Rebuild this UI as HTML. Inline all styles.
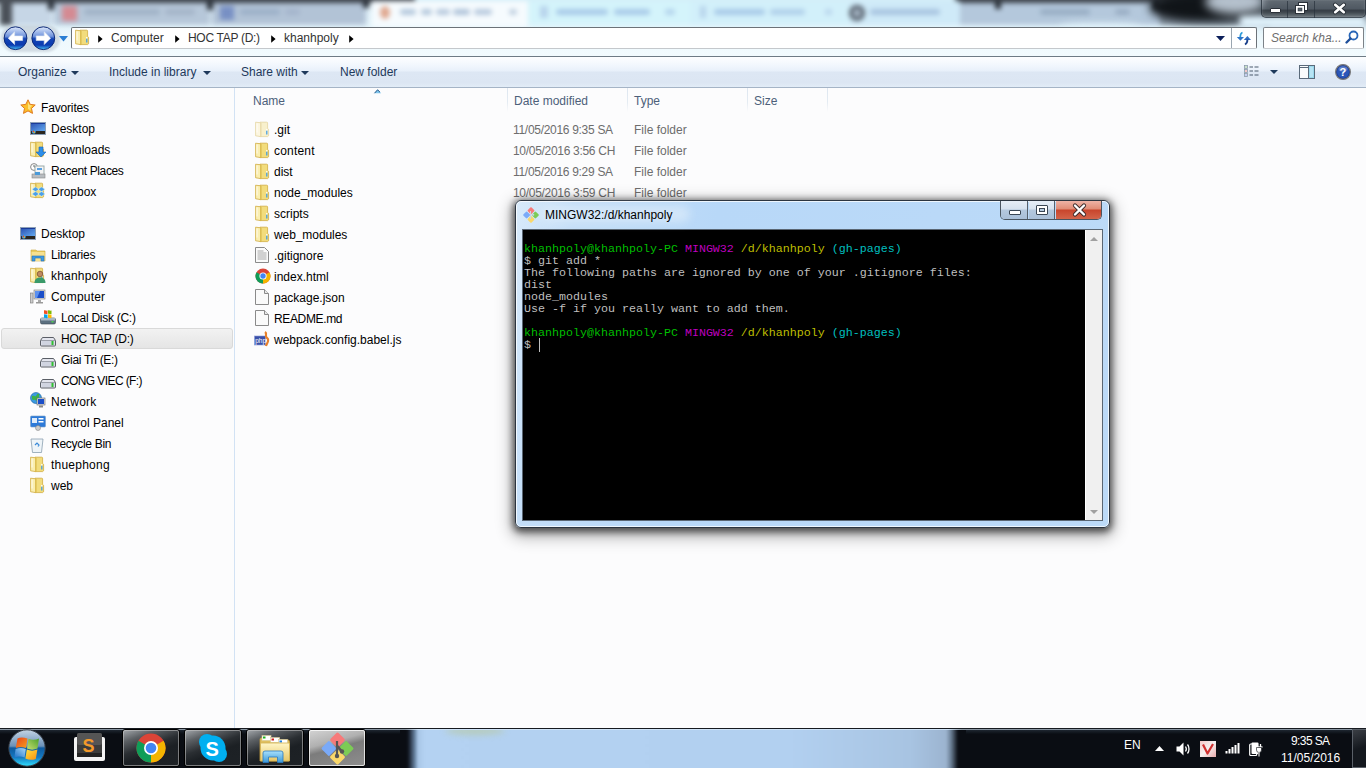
<!DOCTYPE html><html><head><meta charset="utf-8"><style>
*{margin:0;padding:0;box-sizing:border-box}
html,body{width:1366px;height:768px;overflow:hidden;background:#fcfcfd;font-family:"Liberation Sans",sans-serif;font-size:12px;color:#000}
.a{position:absolute}
.t{position:absolute;white-space:nowrap;line-height:14px;height:14px}
svg{position:absolute;overflow:visible}
#top{left:0;top:0;width:1366px;height:56px;overflow:hidden;background:#e4f2fa}
#sep{left:0;top:56px;width:1366px;height:1px;background:#6e7b85}
#tb{left:0;top:57px;width:1366px;height:31px;background:linear-gradient(#fdfeff 0,#f2f7fd 8px,#e8f0fa 14px,#dde7f4 15px,#dce6f3 26px,#e2ecf7 30px);border-bottom:1px solid #a5b4c6}
#split{left:234px;top:88px;width:1px;height:640px;background:#d2e2f4}
.tbt{color:#1e395b}
.dd{position:absolute;width:0;height:0;border-left:4px solid transparent;border-right:4px solid transparent;border-top:4px solid #1e395b}
.nv{color:#000}
.hd{color:#4c607a}
.gr{color:#6d6d6d}
</style></head><body>
<div id="top" class="a">
<div class="a" style="left:0;top:0;width:1366px;height:56px;background:linear-gradient(#dcecf6 0,#e4f4fb 26px,#eef9fd 40px,#f2fbfe 56px)"></div>
<div class="a" style="left:-10px;top:-10px;width:1400px;height:50px;filter:blur(2.4px)"><div class="a" style="left:0px;top:0px;width:425px;height:13px;background:#3e444c;"></div><div class="a" style="left:965px;top:0px;width:440px;height:13px;background:#3e444c;"></div><div class="a" style="left:425px;top:0px;width:540px;height:13px;background:#d4eef8;"></div><div class="a" style="left:14px;top:13px;width:48px;height:22px;background:#c6d6e6;"></div><div class="a" style="left:10px;top:0px;width:12px;height:35px;background:#4a5058;"></div><div class="a" style="left:64px;top:13px;width:156px;height:22px;background:#b6c7d9;"></div><div class="a" style="left:222px;top:13px;width:154px;height:22px;background:#b2c3d6;"></div><div class="a" style="left:382px;top:11px;width:156px;height:26px;background:#f6fbfe;"></div><div class="a" style="left:538px;top:11px;width:162px;height:24px;background:#d4f4fb;"></div><div class="a" style="left:700px;top:11px;width:160px;height:24px;background:#d2f0fa;"></div><div class="a" style="left:860px;top:11px;width:110px;height:24px;background:#cfeaf8;"></div><div class="a" style="left:970px;top:13px;width:200px;height:22px;background:#b4c8dc;"></div><div class="a" style="left:1170px;top:13px;width:110px;height:22px;background:#8a98a6;"></div><div class="a" style="left:58px;top:10px;width:6px;height:10px;background:#2a3038;"></div><div class="a" style="left:217px;top:10px;width:6px;height:10px;background:#2a3038;"></div><div class="a" style="left:373px;top:10px;width:6px;height:8px;background:#2a3038;"></div><div class="a" style="left:1005px;top:10px;width:6px;height:9px;background:#2a3038;"></div><div class="a" style="left:1163px;top:10px;width:6px;height:9px;background:#2a3038;"></div><div class="a" style="left:72px;top:16px;width:15px;height:15px;background:#d48a92;"></div><div class="a" style="left:230px;top:16px;width:14px;height:14px;background:#7890c4;"></div><div class="a" style="left:390px;top:16px;width:10px;height:13px;background:#e0a890;border-radius:50%"></div><div class="a" style="left:550px;top:16px;width:8px;height:12px;background:#b8d4ec;"></div><div class="a" style="left:710px;top:16px;width:6px;height:12px;background:#b8d4ec;"></div><div class="a" style="left:859px;top:15px;width:16px;height:16px;background:#58626e;border-radius:50%"></div><div class="a" style="left:863px;top:19px;width:8px;height:8px;background:#a8b8c8;border-radius:50%"></div><div class="a" style="left:94px;top:19px;width:76px;height:6px;background:#a0b2c6;border-radius:3px"></div><div class="a" style="left:175px;top:19px;width:30px;height:6px;background:#a4b4c8;border-radius:3px"></div><div class="a" style="left:250px;top:19px;width:40px;height:6px;background:#9cb0c8;border-radius:3px"></div><div class="a" style="left:295px;top:19px;width:15px;height:6px;background:#a4b4cc;border-radius:3px"></div><div class="a" style="left:410px;top:19px;width:16px;height:6px;background:#b4c8dc;border-radius:3px"></div><div class="a" style="left:431px;top:19px;width:11px;height:6px;background:#b4c8dc;border-radius:3px"></div><div class="a" style="left:446px;top:19px;width:14px;height:6px;background:#b8cade;border-radius:3px"></div><div class="a" style="left:463px;top:19px;width:17px;height:6px;background:#b0c4da;border-radius:3px"></div><div class="a" style="left:484px;top:19px;width:18px;height:6px;background:#b8cade;border-radius:3px"></div><div class="a" style="left:519px;top:19px;width:8px;height:6px;background:#c0d0e0;border-radius:3px"></div><div class="a" style="left:566px;top:19px;width:52px;height:6px;background:#a8cae8;border-radius:3px"></div><div class="a" style="left:624px;top:19px;width:36px;height:6px;background:#a8cae8;border-radius:3px"></div><div class="a" style="left:675px;top:19px;width:10px;height:6px;background:#b4d4ec;border-radius:3px"></div><div class="a" style="left:724px;top:19px;width:51px;height:6px;background:#a8cae8;border-radius:3px"></div><div class="a" style="left:780px;top:19px;width:35px;height:6px;background:#b0d0ea;border-radius:3px"></div><div class="a" style="left:835px;top:19px;width:7px;height:6px;background:#b8d4ec;border-radius:3px"></div><div class="a" style="left:880px;top:19px;width:70px;height:6px;background:#a8c4e0;border-radius:3px"></div><div class="a" style="left:1050px;top:19px;width:50px;height:6px;background:#98aec4;border-radius:3px"></div><div class="a" style="left:1125px;top:19px;width:15px;height:6px;background:#9aaec4;border-radius:3px"></div></div>
<div class="a" style="left:0;top:-10px;width:1366px;height:45px;filter:blur(5px)"><div class="a" style="left:1150px;top:2px;width:115px;height:30px;border-radius:45%;background:#101418"></div><div class="a" style="left:1205px;top:0;width:60px;height:24px;border-radius:50%;background:#b4c0cc"></div><div class="a" style="left:1262px;top:0;width:110px;height:32px;background:#46505a"></div><div class="a" style="left:1060px;top:34px;width:80px;height:10px;border-radius:40%;background:#e0f2fa"></div></div>
<div class="a" style="left:1240px;top:16px;width:126px;height:12px;background:#e0f2fc;filter:blur(3px)"></div>
</div>
<div class="a" style="left:1px;top:25px;width:59px;height:27px;border-radius:14px;background:rgba(190,200,210,0.6);filter:blur(1.2px)"></div>
<svg style="left:0;top:20px" width="60" height="40" viewBox="0 0 60 40"><defs><linearGradient id="nbg" x1="0" y1="0" x2="0" y2="1"><stop offset="0" stop-color="#dde8fb"/><stop offset="0.42" stop-color="#6f93dc"/><stop offset="0.52" stop-color="#1546b4"/><stop offset="0.8" stop-color="#0b3ab0"/><stop offset="1" stop-color="#46c0f6"/></linearGradient></defs><circle cx="15.5" cy="18.2" r="11.4" fill="url(#nbg)" stroke="#0e2a78" stroke-width="1"/><circle cx="43.3" cy="18.2" r="11.4" fill="url(#nbg)" stroke="#0e2a78" stroke-width="1"/><path d="M8.2 18.2L14.6 11.8V15.9H22.6V20.5H14.6V24.6Z" fill="#fff" stroke="#dfe6f0" stroke-width=".6" stroke-linejoin="round"/><path d="M50.6 18.2L44.2 11.8V15.9H36.2V20.5H44.2V24.6Z" fill="#fff" stroke="#dfe6f0" stroke-width=".6" stroke-linejoin="round"/></svg>
<svg style="left:59px;top:36px" width="10" height="6" viewBox="0 0 10 6"><path d="M0 0h9L4.5 5.5z" fill="#2a7fd4"/></svg>
<div class="a" style="left:71px;top:27px;width:1186px;height:22px;background:#fff;border:1px solid #6c7278;border-bottom-color:#c4c8cc;border-radius:2px"></div>
<div class="a" style="left:1231px;top:28px;width:1px;height:20px;background:#9aa6b1"></div>
<svg style="left:1216px;top:36px" width="9" height="6" viewBox="0 0 9 6"><path d="M0 0h9L4.5 5z" fill="#0c1f5a"/></svg>
<svg style="left:1236px;top:30px" width="16" height="16" viewBox="0 0 16 16"><path d="M6.5 2.5C5 3 4.2 4.5 4.3 7.5" stroke="#2a9ad8" stroke-width="1.8" fill="none"/><path d="M0.8 7H8L4.4 10.8z" fill="#2f74c8"/><path d="M7.8 10H15L11.4 6z" fill="#2f6cc0"/><path d="M11.4 9.5C11.5 12 10.8 13.5 9 14.5" stroke="#1a3f8a" stroke-width="1.8" fill="none"/></svg>
<div class="a" style="left:1263px;top:27px;width:101px;height:22px;background:#fff;border:1px solid #7c8288;border-bottom-color:#c8ccd0;border-radius:2px"></div>
<div class="t" style="left:1271px;top:31px;color:#6d6d6d;font-style:italic">Search kha...</div>
<svg style="left:1345px;top:30px" width="14" height="15" viewBox="0 0 14 15"><circle cx="8.5" cy="5.5" r="4" stroke="#2866b8" stroke-width="1.8" fill="none"/><path d="M5.5 8.5L1.5 12.5" stroke="#1f4f9a" stroke-width="2.4" stroke-linecap="round"/></svg>
<svg style="left:75px;top:29px" width="14" height="16" viewBox="0 0 14 16"><path d="M5 1.2h6.8a.8.8 0 0 1 .8.8v5.5l1 .8v6.5l-1 .8H5z" fill="#f2dc7c" stroke="#d0ac40" stroke-width="0.8"/><path d="M0.6 1.2l5.2 .6v13.8l-5.2-.8z" fill="#faeeb0" stroke="#d0ac40" stroke-width="0.8"/><path d="M2 2.5v9" stroke="#fff" stroke-width="1" opacity=".8"/><path d="M5.8 2v13.5" stroke="#dcbc4c" stroke-width="1"/><path d="M11.8 9.5v4" stroke="#3a9ae8" stroke-width="1.2"/><path d="M11.8 8v1.5" stroke="#fff" stroke-width="1.2"/></svg>
<svg style="left:98px;top:34.5px" width="5" height="8" viewBox="0 0 5 8"><path d="M0.2 0.2v7.6L4.6 4z" fill="#000"/></svg>
<div class="t" style="left:111px;top:31px;color:#333">Computer</div>
<svg style="left:175px;top:34.5px" width="5" height="8" viewBox="0 0 5 8"><path d="M0.2 0.2v7.6L4.6 4z" fill="#000"/></svg>
<div class="t" style="left:188px;top:31px;color:#333;letter-spacing:-0.3px">HOC TAP (D:)</div>
<svg style="left:271px;top:34.5px" width="5" height="8" viewBox="0 0 5 8"><path d="M0.2 0.2v7.6L4.6 4z" fill="#000"/></svg>
<div class="t" style="left:284px;top:31px;color:#333">khanhpoly</div>
<svg style="left:349px;top:34.5px" width="5" height="8" viewBox="0 0 5 8"><path d="M0.2 0.2v7.6L4.6 4z" fill="#000"/></svg>
<div class="a" style="left:1261px;top:0;width:105px;height:18px;border:1px solid rgba(40,50,60,0.8);border-top:none;border-radius:0 0 5px 5px;background:linear-gradient(rgba(255,255,255,0.15),rgba(255,255,255,0.05) 9px,rgba(0,0,0,0.25) 10px,rgba(0,0,0,0.35));box-shadow:inset 0 0 1px rgba(255,255,255,.5)"></div>
<div class="a" style="left:1287px;top:1px;width:1px;height:17px;background:rgba(40,50,60,0.7)"></div>
<div class="a" style="left:1314px;top:1px;width:1px;height:17px;background:rgba(40,50,60,0.7)"></div>
<div class="a" style="left:1270px;top:8px;width:11px;height:5px;background:#fff;border:1px solid #2a3038;border-radius:1px"></div>
<svg style="left:1295px;top:2px" width="13" height="12" viewBox="0 0 13 12"><rect x="3.5" y="0.5" width="9" height="8" fill="#fff" stroke="#2a3038"/><rect x="0.5" y="3.5" width="9" height="8" fill="#fff" stroke="#2a3038"/><rect x="3" y="6" width="4" height="3" fill="#5a646e" stroke="#2a3038" stroke-width=".5"/></svg>
<svg style="left:1333px;top:3px" width="13" height="11" viewBox="0 0 13 11"><path d="M2.2 1.8L10.8 9.2M10.8 1.8L2.2 9.2" stroke="#2a3038" stroke-width="4.4" stroke-linecap="round"/><path d="M2.2 1.8L10.8 9.2M10.8 1.8L2.2 9.2" stroke="#fff" stroke-width="2.6" stroke-linecap="round"/></svg>
<div id="sep" class="a"></div>
<div id="tb" class="a"></div>
<div id="split" class="a"></div>
<div class="t tbt" style="left:18px;top:65px">Organize</div><div class="dd" style="left:71px;top:71px"></div>
<div class="t tbt" style="left:109px;top:65px">Include in library</div><div class="dd" style="left:203px;top:71px"></div>
<div class="t tbt" style="left:241px;top:65px">Share with</div><div class="dd" style="left:301px;top:71px"></div>
<div class="t tbt" style="left:340px;top:65px">New folder</div>
<svg style="left:1244px;top:65px" width="16" height="13" viewBox="0 0 16 13"><rect x="0.5" y="0.5" width="3" height="3" fill="#fff" stroke="#8898a8" stroke-width=".8"/><rect x="1.5" y="1.5" width="1" height="1" fill="#2a8a2a"/><rect x="0.5" y="4.5" width="3" height="3" fill="#fff" stroke="#8898a8" stroke-width=".8"/><rect x="1.5" y="5.5" width="1" height="1" fill="#d02020"/><rect x="0.5" y="8.5" width="3" height="3" fill="#fff" stroke="#8898a8" stroke-width=".8"/><rect x="1.5" y="9.5" width="1" height="1" fill="#2040d0"/><path d="M5.5 2h3.5M10.5 2h4M5.5 6h3.5M10.5 6h4M5.5 10h3.5M10.5 10h4" stroke="#4a5a6c" stroke-width="1.1"/></svg>
<div class="dd" style="left:1270px;top:70px;border-top-color:#1e395b"></div>
<svg style="left:1299px;top:65px" width="16" height="14" viewBox="0 0 16 14"><rect x="0.5" y="0.5" width="15" height="13" fill="#fafbfc" stroke="#5a6a7a"/><path d="M1 2.5h8" stroke="#5a6a7a" stroke-width="1"/><rect x="9.5" y="0.5" width="6" height="13" fill="#9ad8ec" stroke="#5a6a7a"/><rect x="11" y="2" width="3" height="10" fill="#b8e4f4"/></svg>
<svg style="left:1335px;top:64px" width="16" height="16" viewBox="0 0 16 16"><circle cx="8" cy="8" r="7.4" fill="#1a3c9a" stroke="#7a7a7a" stroke-width="1.2"/><circle cx="8" cy="8" r="6" fill="#2a56b8"/><ellipse cx="8" cy="5" rx="4.5" ry="2.8" fill="rgba(255,255,255,.22)"/><text x="4.6" y="12.3" font-size="11" font-weight="bold" font-family="Liberation Sans" fill="#fff">?</text></svg>
<svg style="left:374px;top:89px" width="8" height="5" viewBox="0 0 8 5"><path d="M0.3 4.2L3.6 0.6 7.2 4.2z" fill="#7ec4ec"/><path d="M0.5 4.2L3.6 0.8 6 3.2" fill="none" stroke="#2a5a88" stroke-width="1"/></svg>
<div class="a" style="left:507px;top:88px;width:1px;height:24px;background:linear-gradient(#dde6f0,#e4ebf2 60%,#fcfcfd)"></div>
<div class="a" style="left:627px;top:88px;width:1px;height:24px;background:linear-gradient(#dde6f0,#e4ebf2 60%,#fcfcfd)"></div>
<div class="a" style="left:747px;top:88px;width:1px;height:24px;background:linear-gradient(#dde6f0,#e4ebf2 60%,#fcfcfd)"></div>
<div class="a" style="left:827px;top:88px;width:1px;height:24px;background:linear-gradient(#dde6f0,#e4ebf2 60%,#fcfcfd)"></div>
<div class="a" style="left:1px;top:328px;width:232px;height:21px;border:1px solid #d9d9d9;border-radius:3px;background:linear-gradient(#f2f2f2,#e5e5e5)"></div>
<div class="t nv" style="left:41px;top:101px;letter-spacing:-0.16px">Favorites</div>
<svg style="left:20px;top:99px" width="16" height="16" viewBox="0 0 16 16"><path d="M8 0.8l2.2 4.6 5 .6-3.7 3.4 1 5-4.5-2.5-4.5 2.5 1-5L.8 6l5-.6z" fill="#fbbf2a" stroke="#e07a20" stroke-width="1"/><path d="M8 3l1.4 3 3 .4-2.2 2 .6 3L8 10" fill="#fde27a"/></svg>
<div class="t nv" style="left:51px;top:122px;letter-spacing:0px">Desktop</div>
<svg style="left:30px;top:122px" width="16" height="13" viewBox="0 0 16 13"><defs><linearGradient id="dskg" x1="0" y1="0" x2="1" y2="1"><stop offset="0" stop-color="#2a50b0"/><stop offset="1" stop-color="#62a8f0"/></linearGradient></defs><rect x="0.5" y="0.5" width="15" height="12" fill="#a8b8cc" stroke="#8ca0b8"/><rect x="1" y="1" width="14" height="8" fill="url(#dskg)"/><rect x="1" y="1" width="14" height="1" fill="#1a3a98"/><rect x="1" y="9" width="14" height="3" fill="#2a2620"/><circle cx="3.8" cy="9.8" r="2" fill="#3a9ae8"/><circle cx="3.4" cy="9.4" r=".8" fill="#e83a20"/><circle cx="4.3" cy="10.2" r=".8" fill="#f0c020"/></svg>
<div class="t nv" style="left:51px;top:143px;letter-spacing:0px">Downloads</div>
<svg style="left:30px;top:141px" width="14" height="16" viewBox="0 0 14 16"><path d="M5 1.2h6.8a.8.8 0 0 1 .8.8v5.5l1 .8v6.5l-1 .8H5z" fill="#f2dc7c" stroke="#d0ac40" stroke-width="0.8"/><path d="M0.6 1.2l5.2 .6v13.8l-5.2-.8z" fill="#faeeb0" stroke="#d0ac40" stroke-width="0.8"/><path d="M2 2.5v9" stroke="#fff" stroke-width="1" opacity=".8"/><path d="M5.8 2v13.5" stroke="#dcbc4c" stroke-width="1"/><path d="M11.8 9.5v4" stroke="#3a9ae8" stroke-width="1.2"/><path d="M11.8 8v1.5" stroke="#fff" stroke-width="1.2"/></svg><svg style="left:36px;top:147px" width="10" height="10" viewBox="0 0 10 10"><path d="M3 0h4v5h3L5 10 0 5h3z" fill="#2d8ee8" stroke="#1a66b8" stroke-width=".6"/></svg>
<div class="t nv" style="left:51px;top:164px;letter-spacing:-0.38px">Recent Places</div>
<svg style="left:30px;top:163px" width="16" height="16" viewBox="0 0 16 16"><circle cx="4" cy="4" r="3.4" fill="#fff" stroke="#888"/><path d="M4 2v2h2" stroke="#444" stroke-width=".8" fill="none"/><rect x="5" y="3" width="9" height="10" fill="#f4f4f4" stroke="#9aa"/><rect x="7" y="5" width="5" height="2" fill="#5aa0e0"/><rect x="2" y="11" width="13" height="4" fill="#b8bcc0" stroke="#888" stroke-width=".6"/><rect x="5" y="9" width="5" height="3" fill="#4a9ad8"/></svg>
<div class="t nv" style="left:51px;top:185px;letter-spacing:0px">Dropbox</div>
<svg style="left:30px;top:182px" width="14" height="16" viewBox="0 0 14 16"><path d="M5 1.2h6.8a.8.8 0 0 1 .8.8v5.5l1 .8v6.5l-1 .8H5z" fill="#f2dc7c" stroke="#d0ac40" stroke-width="0.8"/><path d="M0.6 1.2l5.2 .6v13.8l-5.2-.8z" fill="#faeeb0" stroke="#d0ac40" stroke-width="0.8"/><path d="M2 2.5v9" stroke="#fff" stroke-width="1" opacity=".8"/><path d="M5.8 2v13.5" stroke="#dcbc4c" stroke-width="1"/><path d="M11.8 9.5v4" stroke="#3a9ae8" stroke-width="1.2"/><path d="M11.8 8v1.5" stroke="#fff" stroke-width="1.2"/></svg><svg style="left:32px;top:187px" width="13" height="11" viewBox="0 0 13 11"><path d="M3.5 0L0 2.3l3.5 2.3L7 2.3zM9.5 0L6 2.3l3.5 2.3L13 2.3zM0 7l3.5 2.3L7 7 3.5 4.6zM13 7L9.5 9.3 6 7l3.5-2.4z" fill="#4c9ee8" stroke="#dff" stroke-width=".4"/></svg>
<div class="t nv" style="left:41px;top:227px;letter-spacing:0px">Desktop</div>
<svg style="left:20px;top:227px" width="16" height="13" viewBox="0 0 16 13"><defs><linearGradient id="dskg" x1="0" y1="0" x2="1" y2="1"><stop offset="0" stop-color="#2a50b0"/><stop offset="1" stop-color="#62a8f0"/></linearGradient></defs><rect x="0.5" y="0.5" width="15" height="12" fill="#a8b8cc" stroke="#8ca0b8"/><rect x="1" y="1" width="14" height="8" fill="url(#dskg)"/><rect x="1" y="1" width="14" height="1" fill="#1a3a98"/><rect x="1" y="9" width="14" height="3" fill="#2a2620"/><circle cx="3.8" cy="9.8" r="2" fill="#3a9ae8"/><circle cx="3.4" cy="9.4" r=".8" fill="#e83a20"/><circle cx="4.3" cy="10.2" r=".8" fill="#f0c020"/></svg>
<div class="t nv" style="left:51px;top:248px;letter-spacing:-0.19px">Libraries</div>
<svg style="left:30px;top:248px" width="16" height="14" viewBox="0 0 16 14"><path d="M1 2h5l1 1h8v10H1z" fill="#eacc60" stroke="#c9a840" stroke-width=".6"/><rect x="1.5" y="4" width="13" height="9" fill="#f6e190"/><path d="M2 13V8h12v5h-3v-3H5v3z" fill="#3d9ae0" stroke="#2570b8" stroke-width=".6"/></svg>
<div class="t nv" style="left:51px;top:269px;letter-spacing:0.2px">khanhpoly</div>
<svg style="left:30px;top:267px" width="14" height="16" viewBox="0 0 14 16"><path d="M5 1.2h6.8a.8.8 0 0 1 .8.8v5.5l1 .8v6.5l-1 .8H5z" fill="#f2dc7c" stroke="#d0ac40" stroke-width="0.8"/><path d="M0.6 1.2l5.2 .6v13.8l-5.2-.8z" fill="#faeeb0" stroke="#d0ac40" stroke-width="0.8"/><path d="M2 2.5v9" stroke="#fff" stroke-width="1" opacity=".8"/><path d="M5.8 2v13.5" stroke="#dcbc4c" stroke-width="1"/><path d="M11.8 9.5v4" stroke="#3a9ae8" stroke-width="1.2"/><path d="M11.8 8v1.5" stroke="#fff" stroke-width="1.2"/></svg><svg style="left:34px;top:270px" width="12" height="13" viewBox="0 0 12 13"><circle cx="6" cy="4" r="2.8" fill="#c08a60" stroke="#603820" stroke-width=".6"/><path d="M0.5 13c0-4 2.5-5.5 5.5-5.5s5.5 1.5 5.5 5.5z" fill="#3a9a6a"/></svg>
<div class="t nv" style="left:51px;top:290px;letter-spacing:0.2px">Computer</div>
<svg style="left:30px;top:289px" width="16" height="16" viewBox="0 0 16 16"><rect x="0.5" y="4" width="2.5" height="10" fill="#ccc" stroke="#777" stroke-width=".6"/><rect x="4" y="1" width="11" height="9" fill="#ddd" stroke="#777" stroke-width=".6"/><rect x="5" y="2" width="9" height="7" fill="#1a4ec8"/><path d="M5 2h5l-3 7H5z" fill="#5a90f0"/><rect x="8" y="11" width="3" height="2" fill="#aaa"/><rect x="6" y="13" width="7" height="1.5" fill="#999"/></svg>
<div class="t nv" style="left:61px;top:311px;letter-spacing:-0.27px">Local Disk (C:)</div>
<svg style="left:40px;top:309px" width="16" height="16" viewBox="0 0 16 16"><rect x="0.5" y="9" width="15" height="6" rx="1.5" fill="#5c7080" stroke="#3a4650" stroke-width=".6"/><rect x="1" y="9" width="14" height="2.5" fill="#a8b8c4"/><rect x="11.5" y="12" width="2" height="1.5" fill="#4ad04a"/><path d="M4 1.5c1.5-.5 2.5.5 3.5 0v3.5c-1 .5-2-.5-3.5 0z" fill="#f25022"/><path d="M8 1.5c1.5-.5 2.5.5 3.5 0v3.5c-1 .5-2-.5-3.5 0z" fill="#7fba00"/><path d="M4 5.5c1.5-.5 2.5.5 3.5 0V9c-1 .5-2-.5-3.5 0z" fill="#00a4ef"/><path d="M8 5.5c1.5-.5 2.5.5 3.5 0V9c-1 .5-2-.5-3.5 0z" fill="#ffb900"/></svg>
<div class="t nv" style="left:61px;top:332px;letter-spacing:-0.23px">HOC TAP (D:)</div>
<svg style="left:40px;top:337px" width="16" height="9" viewBox="0 0 16 9"><path d="M2.5 0.5h11l2 3v4.5a1 1 0 0 1-1 1h-13a1 1 0 0 1-1-1V3.5z" fill="#e4e6ee" stroke="#5a5e66" stroke-width="1"/><path d="M1 3.5h14" stroke="#9a9ea8" stroke-width="1"/><rect x="1.5" y="4" width="13" height="4" fill="#d0d4e0"/><rect x="11.5" y="4" width="2" height="4" fill="#30c030"/></svg>
<div class="t nv" style="left:61px;top:353px;letter-spacing:-0.3px">Giai Tri (E:)</div>
<svg style="left:40px;top:358px" width="16" height="9" viewBox="0 0 16 9"><path d="M2.5 0.5h11l2 3v4.5a1 1 0 0 1-1 1h-13a1 1 0 0 1-1-1V3.5z" fill="#e4e6ee" stroke="#5a5e66" stroke-width="1"/><path d="M1 3.5h14" stroke="#9a9ea8" stroke-width="1"/><rect x="1.5" y="4" width="13" height="4" fill="#d0d4e0"/><rect x="11.5" y="4" width="2" height="4" fill="#30c030"/></svg>
<div class="t nv" style="left:61px;top:374px;letter-spacing:-0.6px">CONG VIEC (F:)</div>
<svg style="left:40px;top:379px" width="16" height="9" viewBox="0 0 16 9"><path d="M2.5 0.5h11l2 3v4.5a1 1 0 0 1-1 1h-13a1 1 0 0 1-1-1V3.5z" fill="#e4e6ee" stroke="#5a5e66" stroke-width="1"/><path d="M1 3.5h14" stroke="#9a9ea8" stroke-width="1"/><rect x="1.5" y="4" width="13" height="4" fill="#d0d4e0"/><rect x="11.5" y="4" width="2" height="4" fill="#30c030"/></svg>
<div class="t nv" style="left:51px;top:395px;letter-spacing:0.2px">Network</div>
<svg style="left:30px;top:392px" width="16" height="16" viewBox="0 0 16 16"><circle cx="6" cy="6" r="5.5" fill="#3a9ae0" stroke="#1a5ea0" stroke-width=".6"/><path d="M2 4c2-1 3 1 4 0s1-3 3-2c1 2-1 3 0 5s-3 2-4 1-2 1-3-1z" fill="#3cb04a"/><rect x="7" y="6" width="8" height="7" fill="#ddd" stroke="#666" stroke-width=".6"/><rect x="8" y="7" width="6" height="5" fill="#1a4ec8"/><rect x="9" y="13.5" width="4" height="2" fill="#888"/></svg>
<div class="t nv" style="left:51px;top:416px;letter-spacing:0px">Control Panel</div>
<svg style="left:30px;top:415px" width="16" height="16" viewBox="0 0 16 16"><rect x="0.5" y="1" width="15" height="11" rx="1" fill="#2d7ad8" stroke="#7aa0c8" stroke-width=".6"/><rect x="2" y="3" width="5" height="5" fill="#fff" opacity=".85"/><rect x="8.5" y="3" width="5" height="1.5" fill="#fff"/><rect x="8.5" y="6" width="5" height="1.5" fill="#fff"/><circle cx="8" cy="13" r="2.5" fill="#ccc" stroke="#777" stroke-width=".5"/></svg>
<div class="t nv" style="left:51px;top:437px;letter-spacing:-0.29px">Recycle Bin</div>
<svg style="left:30px;top:437px" width="14" height="16" viewBox="0 0 14 16"><path d="M1 2h12l-1.5 13.5h-9z" fill="#eef4f8" stroke="#8aa0b0" stroke-width=".8"/><path d="M5 8l2-2 2 2-1 1.5" stroke="#3a8ad8" stroke-width="1.2" fill="none"/></svg>
<div class="t nv" style="left:51px;top:458px;letter-spacing:0.23px">thuephong</div>
<svg style="left:30px;top:456px" width="14" height="16" viewBox="0 0 14 16"><path d="M5 1.2h6.8a.8.8 0 0 1 .8.8v5.5l1 .8v6.5l-1 .8H5z" fill="#f2dc7c" stroke="#d0ac40" stroke-width="0.8"/><path d="M0.6 1.2l5.2 .6v13.8l-5.2-.8z" fill="#faeeb0" stroke="#d0ac40" stroke-width="0.8"/><path d="M2 2.5v9" stroke="#fff" stroke-width="1" opacity=".8"/><path d="M5.8 2v13.5" stroke="#dcbc4c" stroke-width="1"/><path d="M11.8 9.5v4" stroke="#3a9ae8" stroke-width="1.2"/><path d="M11.8 8v1.5" stroke="#fff" stroke-width="1.2"/></svg>
<div class="t nv" style="left:51px;top:479px;letter-spacing:0px">web</div>
<svg style="left:30px;top:477px" width="14" height="16" viewBox="0 0 14 16"><path d="M5 1.2h6.8a.8.8 0 0 1 .8.8v5.5l1 .8v6.5l-1 .8H5z" fill="#f2dc7c" stroke="#d0ac40" stroke-width="0.8"/><path d="M0.6 1.2l5.2 .6v13.8l-5.2-.8z" fill="#faeeb0" stroke="#d0ac40" stroke-width="0.8"/><path d="M2 2.5v9" stroke="#fff" stroke-width="1" opacity=".8"/><path d="M5.8 2v13.5" stroke="#dcbc4c" stroke-width="1"/><path d="M11.8 9.5v4" stroke="#3a9ae8" stroke-width="1.2"/><path d="M11.8 8v1.5" stroke="#fff" stroke-width="1.2"/></svg>
<div class="t hd" style="left:253px;top:94px">Name</div>
<div class="t hd" style="left:514px;top:94px">Date modified</div>
<div class="t hd" style="left:634px;top:94px">Type</div>
<div class="t hd" style="left:754px;top:94px">Size</div>
<div class="t nv" style="left:274px;top:123px;letter-spacing:0px">.git</div>
<svg style="left:255px;top:121px" width="14" height="16" viewBox="0 0 14 16"><path d="M5 1.2h6.8a.8.8 0 0 1 .8.8v5.5l1 .8v6.5l-1 .8H5z" fill="#f8f0cc" stroke="#e4d4a0" stroke-width="0.8"/><path d="M0.6 1.2l5.2 .6v13.8l-5.2-.8z" fill="#fcf6e0" stroke="#e4d4a0" stroke-width="0.8"/><path d="M2 2.5v9" stroke="#fff" stroke-width="1" opacity=".8"/><path d="M5.8 2v13.5" stroke="#eadcaa" stroke-width="1"/><path d="M11.8 9.5v4" stroke="#3a9ae8" stroke-width="1.2"/><path d="M11.8 8v1.5" stroke="#fff" stroke-width="1.2"/></svg>
<div class="t gr" style="left:513px;top:123px;letter-spacing:-0.3px">11/05/2016 9:35 SA</div>
<div class="t gr" style="left:634px;top:123px">File folder</div>
<div class="t nv" style="left:274px;top:144px;letter-spacing:0.2px">content</div>
<svg style="left:255px;top:142px" width="14" height="16" viewBox="0 0 14 16"><path d="M5 1.2h6.8a.8.8 0 0 1 .8.8v5.5l1 .8v6.5l-1 .8H5z" fill="#f2dc7c" stroke="#d0ac40" stroke-width="0.8"/><path d="M0.6 1.2l5.2 .6v13.8l-5.2-.8z" fill="#faeeb0" stroke="#d0ac40" stroke-width="0.8"/><path d="M2 2.5v9" stroke="#fff" stroke-width="1" opacity=".8"/><path d="M5.8 2v13.5" stroke="#dcbc4c" stroke-width="1"/><path d="M11.8 9.5v4" stroke="#3a9ae8" stroke-width="1.2"/><path d="M11.8 8v1.5" stroke="#fff" stroke-width="1.2"/></svg>
<div class="t gr" style="left:513px;top:144px;letter-spacing:-0.3px">10/05/2016 3:56 CH</div>
<div class="t gr" style="left:634px;top:144px">File folder</div>
<div class="t nv" style="left:274px;top:165px;letter-spacing:0px">dist</div>
<svg style="left:255px;top:163px" width="14" height="16" viewBox="0 0 14 16"><path d="M5 1.2h6.8a.8.8 0 0 1 .8.8v5.5l1 .8v6.5l-1 .8H5z" fill="#f2dc7c" stroke="#d0ac40" stroke-width="0.8"/><path d="M0.6 1.2l5.2 .6v13.8l-5.2-.8z" fill="#faeeb0" stroke="#d0ac40" stroke-width="0.8"/><path d="M2 2.5v9" stroke="#fff" stroke-width="1" opacity=".8"/><path d="M5.8 2v13.5" stroke="#dcbc4c" stroke-width="1"/><path d="M11.8 9.5v4" stroke="#3a9ae8" stroke-width="1.2"/><path d="M11.8 8v1.5" stroke="#fff" stroke-width="1.2"/></svg>
<div class="t gr" style="left:513px;top:165px;letter-spacing:-0.3px">11/05/2016 9:29 SA</div>
<div class="t gr" style="left:634px;top:165px">File folder</div>
<div class="t nv" style="left:274px;top:186px;letter-spacing:0px">node_modules</div>
<svg style="left:255px;top:184px" width="14" height="16" viewBox="0 0 14 16"><path d="M5 1.2h6.8a.8.8 0 0 1 .8.8v5.5l1 .8v6.5l-1 .8H5z" fill="#f2dc7c" stroke="#d0ac40" stroke-width="0.8"/><path d="M0.6 1.2l5.2 .6v13.8l-5.2-.8z" fill="#faeeb0" stroke="#d0ac40" stroke-width="0.8"/><path d="M2 2.5v9" stroke="#fff" stroke-width="1" opacity=".8"/><path d="M5.8 2v13.5" stroke="#dcbc4c" stroke-width="1"/><path d="M11.8 9.5v4" stroke="#3a9ae8" stroke-width="1.2"/><path d="M11.8 8v1.5" stroke="#fff" stroke-width="1.2"/></svg>
<div class="t gr" style="left:513px;top:186px;letter-spacing:-0.3px">10/05/2016 3:59 CH</div>
<div class="t gr" style="left:634px;top:186px">File folder</div>
<div class="t nv" style="left:274px;top:207px;letter-spacing:0px">scripts</div>
<svg style="left:255px;top:205px" width="14" height="16" viewBox="0 0 14 16"><path d="M5 1.2h6.8a.8.8 0 0 1 .8.8v5.5l1 .8v6.5l-1 .8H5z" fill="#f2dc7c" stroke="#d0ac40" stroke-width="0.8"/><path d="M0.6 1.2l5.2 .6v13.8l-5.2-.8z" fill="#faeeb0" stroke="#d0ac40" stroke-width="0.8"/><path d="M2 2.5v9" stroke="#fff" stroke-width="1" opacity=".8"/><path d="M5.8 2v13.5" stroke="#dcbc4c" stroke-width="1"/><path d="M11.8 9.5v4" stroke="#3a9ae8" stroke-width="1.2"/><path d="M11.8 8v1.5" stroke="#fff" stroke-width="1.2"/></svg>
<div class="t gr" style="left:634px;top:207px">File folder</div>
<div class="t nv" style="left:274px;top:228px;letter-spacing:-0.08px">web_modules</div>
<svg style="left:255px;top:226px" width="14" height="16" viewBox="0 0 14 16"><path d="M5 1.2h6.8a.8.8 0 0 1 .8.8v5.5l1 .8v6.5l-1 .8H5z" fill="#f2dc7c" stroke="#d0ac40" stroke-width="0.8"/><path d="M0.6 1.2l5.2 .6v13.8l-5.2-.8z" fill="#faeeb0" stroke="#d0ac40" stroke-width="0.8"/><path d="M2 2.5v9" stroke="#fff" stroke-width="1" opacity=".8"/><path d="M5.8 2v13.5" stroke="#dcbc4c" stroke-width="1"/><path d="M11.8 9.5v4" stroke="#3a9ae8" stroke-width="1.2"/><path d="M11.8 8v1.5" stroke="#fff" stroke-width="1.2"/></svg>
<div class="t gr" style="left:634px;top:228px">File folder</div>
<div class="t nv" style="left:274px;top:249px;letter-spacing:0px">.gitignore</div>
<svg style="left:255px;top:247px" width="14" height="16" viewBox="0 0 14 16"><path d="M0.5 0.5h9l4 4v11h-13z" fill="#fafafa" stroke="#8a8a8a" stroke-width="1"/><path d="M2.5 4h6M2.5 6h9M2.5 8h9M2.5 10h9M2.5 12h9" stroke="#a8a8a8" stroke-width="1"/></svg>
<div class="t nv" style="left:274px;top:270px;letter-spacing:0px">index.html</div>
<svg style="left:255px;top:268px" width="16" height="16" viewBox="-8 -8 16 16"><circle r="7.5" fill="#db4437"/><path d="M0 0L-6.5 -3.75A7.5 7.5 0 0 0 0 7.5z" fill="#0f9d58"/><path d="M0 0L6.5 -3.75A7.5 7.5 0 0 1 0 7.5z" fill="#f4b400"/><circle r="3.6" fill="#fff"/><circle r="2.7" fill="#4285f4"/></svg>
<div class="t nv" style="left:274px;top:291px;letter-spacing:0px">package.json</div>
<svg style="left:255px;top:289px" width="14" height="16" viewBox="0 0 14 16"><path d="M0.5 0.5h9l4 4v11h-13z" fill="#fafafa" stroke="#8a8a8a" stroke-width="1"/><path d="M9.5 0.5v4h4" fill="#e8e8e8" stroke="#8a8a8a" stroke-width="1"/></svg>
<div class="t nv" style="left:274px;top:312px;letter-spacing:-0.35px">README.md</div>
<svg style="left:255px;top:310px" width="14" height="16" viewBox="0 0 14 16"><path d="M0.5 0.5h9l4 4v11h-13z" fill="#fafafa" stroke="#8a8a8a" stroke-width="1"/><path d="M9.5 0.5v4h4" fill="#e8e8e8" stroke="#8a8a8a" stroke-width="1"/></svg>
<div class="t nv" style="left:274px;top:333px;letter-spacing:0px">webpack.config.babel.js</div>
<svg style="left:254px;top:331px" width="16" height="16" viewBox="0 0 16 16"><rect x="0.5" y="5" width="11" height="9" fill="#3a50a8" stroke="#8a9ad8" stroke-width=".6"/><text x="1.2" y="12" font-size="6.5" fill="#fff" font-family="Liberation Sans">php</text><path d="M11 1c3 2-1 4 2 6s0 5-1 8" stroke="#e8802a" stroke-width="2.2" fill="none"/></svg>
<div class="a" style="left:515px;top:200px;width:595px;height:328px;border-radius:6px;box-shadow:0 2px 7px 2px rgba(0,0,0,0.6),0 5px 16px 4px rgba(0,0,0,0.3)"></div>
<div class="a" style="left:515px;top:200px;width:595px;height:328px;border:1px solid #2c3540;border-radius:6px;background:linear-gradient(100deg,#d8eafa 0,#c4def8 60px,#b8d8f8 200px,#bcdaf8 100%);overflow:hidden"><div class="a" style="left:0;top:0;width:593px;height:326px;border:1px solid rgba(255,255,255,0.75);border-radius:5px"></div></div>
<div class="a" style="left:522px;top:229px;width:581px;height:292px;border:1px solid #5a6673;background:#000"></div>
<div class="a" style="left:1085px;top:230px;width:17px;height:290px;background:#f0f0f0;border-left:1px solid #fff"></div>
<div class="a" style="left:1090px;top:237px;width:0;height:0;border-left:4px solid transparent;border-right:4px solid transparent;border-bottom:4px solid #a0a0a0"></div>
<div class="a" style="left:1090px;top:510px;width:0;height:0;border-left:4px solid transparent;border-right:4px solid transparent;border-top:4px solid #a0a0a0"></div>
<div class="a" style="left:540px;top:206px;width:150px;height:16px;border-radius:8px;background:rgba(225,238,250,0.6);filter:blur(4px)"></div>
<div class="t" style="left:545px;top:208px;color:#000">MINGW32:/d/khanhpoly</div>
<svg style="left:523px;top:207px" width="16" height="16" viewBox="0 0 16 16"><g transform="rotate(45 8 8)"><rect x="2.2" y="2.2" width="5.4" height="5.4" rx="1" fill="#f77a7a"/><rect x="8.4" y="2.2" width="5.4" height="5.4" rx="1" fill="#7ccc55"/><rect x="2.2" y="8.4" width="5.4" height="5.4" rx="1" fill="#7aaaf8"/><rect x="8.4" y="8.4" width="5.4" height="5.4" rx="1" fill="#fad86a"/></g><path d="M7.5 4v8M7.5 8l2.5-0.2" stroke="#c8d4e0" stroke-width="1.1"/><circle cx="10.3" cy="7.7" r="1" fill="#c8d4e0"/></svg>
<div class="a" style="left:524px;top:243px;width:560px;font-family:Liberation Mono,monospace;font-size:11.67px;line-height:12px;color:#bfbfbf;white-space:pre"><span style="color:#00bf00">khanhpoly@khanhpoly-PC</span> <span style="color:#bf00bf">MINGW32</span> <span style="color:#bfbf00">/d/khanhpoly</span> <span style="color:#00bfbf">(gh-pages)</span>
$ git add *
The following paths are ignored by one of your .gitignore files:
dist
node_modules
Use -f if you really want to add them.

<span style="color:#00bf00">khanhpoly@khanhpoly-PC</span> <span style="color:#bf00bf">MINGW32</span> <span style="color:#bfbf00">/d/khanhpoly</span> <span style="color:#00bfbf">(gh-pages)</span>
$ <span style="border-left:1px solid #bfbfbf;margin-left:1px"></span></div>
<div class="a" style="left:1000px;top:201px;width:102px;height:19px;border:1px solid #4a5560;border-top:none;border-radius:0 0 5px 5px;overflow:hidden"><div class="a" style="left:0;top:0;width:27px;height:18px;background:linear-gradient(#e6eef7 0,#d6e2ef 8px,#b4c8de 9px,#a9bfd8 18px);border-right:1px solid #56606c"></div><div class="a" style="left:28px;top:0;width:26px;height:18px;background:linear-gradient(#e6eef7 0,#d6e2ef 8px,#b4c8de 9px,#a9bfd8 18px);border-right:1px solid #56606c"></div><div class="a" style="left:55px;top:0;width:47px;height:18px;background:linear-gradient(#eeb3a6 0,#e08c76 8px,#c8452c 9px,#d3644a 18px)"></div></div>
<div class="a" style="left:1009px;top:210px;width:12px;height:5px;background:#fff;border:1px solid #3a4654;border-radius:1px"></div>
<div class="a" style="left:1036px;top:205px;width:12px;height:10px;border:1px solid #3a4654;border-radius:1px;background:#fff"></div><div class="a" style="left:1039px;top:208px;width:6px;height:4px;border:1px solid #3a4654;background:#b8cce0"></div>
<svg style="left:1073px;top:204px" width="13" height="12" viewBox="0 0 13 12"><path d="M2 1.5L11 10.5M11 1.5L2 10.5" stroke="#3a2a2a" stroke-width="4.2" stroke-linecap="round"/><path d="M2 1.5L11 10.5M11 1.5L2 10.5" stroke="#fff" stroke-width="2.4" stroke-linecap="round"/></svg>
<div class="a" style="left:0;top:728px;width:1366px;height:40px;background:#0a0d13;border-top:1px solid #0c1014"></div>
<div class="a" style="left:0;top:729px;width:1366px;height:5px;background:linear-gradient(#8a96a2 0,#8a96a2 1px,#1e2630 1px,#0a0e14 5px)"></div>
<div class="a" style="left:400px;top:729px;width:566px;height:39px;overflow:hidden"><div class="a" style="left:-10px;top:-10px;width:586px;height:60px;background:linear-gradient(90deg,#0a0d13 0,#0a0d13 17px,#1a2230 19px,#6a86a4 25px,#a8c6e6 28px,#b4d2f2 35px,#b2d0f0 400px,#a8c4e2 520px,#9cb4d0 556px,#6a7e94 561px,#0a0d13 568px);filter:blur(1px)"></div><div class="a" style="left:45px;top:-2px;width:60px;height:8px;border-radius:50%;background:#b8c89a;filter:blur(3px);opacity:.6"></div></div>
<div class="a" style="left:0;top:728px;width:1366px;height:1px;background:#161a20"></div>
<div class="a" style="left:0;top:729px;width:1366px;height:1px;background:linear-gradient(90deg,#8a96a2 0,#8a96a2 405px,#d0e4f8 418px,#d0e4f8 948px,#8a96a2 962px)"></div>
<svg style="left:8px;top:729px" width="38" height="38" viewBox="0 0 38 38"><defs><linearGradient id="orb" x1="0" y1="0" x2="0" y2="1"><stop offset="0" stop-color="#c4d4e4"/><stop offset="0.45" stop-color="#6a90b8"/><stop offset="0.5" stop-color="#0e5aa0"/><stop offset="0.75" stop-color="#1478c0"/><stop offset="1" stop-color="#30e0ff"/></linearGradient><linearGradient id="fr" x1="0" y1="0" x2="1" y2="1"><stop offset="0" stop-color="#e8401a"/><stop offset="1" stop-color="#f8a020"/></linearGradient><linearGradient id="fg" x1="1" y1="0" x2="0" y2="1"><stop offset="0" stop-color="#4aa02a"/><stop offset="1" stop-color="#c8e070"/></linearGradient><linearGradient id="fb" x1="0" y1="1" x2="1" y2="0"><stop offset="0" stop-color="#1a70c8"/><stop offset="1" stop-color="#a8d8f8"/></linearGradient><linearGradient id="fy" x1="1" y1="1" x2="0" y2="0"><stop offset="0" stop-color="#f89010"/><stop offset="1" stop-color="#ffe040"/></linearGradient></defs><circle cx="19" cy="19" r="18.2" fill="url(#orb)" stroke="#3a4048" stroke-width="1"/><path d="M9.5 9.5C12 8 15.5 8 19.5 9.5L18 19C14.5 17.6 11 17.6 7.8 19z" fill="url(#fr)"/><path d="M20.5 9.8C24 11.2 27.5 11 31 9.5L29.5 19.5C26 21 22.5 21 19 19.6z" fill="url(#fg)"/><path d="M7.6 20C11 18.5 14.5 18.6 17.8 20L16.6 28.5C13 27 10 27 6.3 28.8z" fill="url(#fb)"/><path d="M18.8 20.5C22.3 22 25.8 22 29.4 20.5L27.8 30C24 31.3 20.8 31 17.4 29.6z" fill="url(#fy)"/></svg>
<svg style="left:74px;top:733px" width="31" height="28" viewBox="0 0 31 28"><rect x="0" y="4" width="31" height="24" rx="2" fill="#f4f4f4"/><rect x="3" y="0" width="25" height="24" rx="2" fill="#3c3c3c"/><rect x="3" y="0" width="25" height="12" rx="2" fill="#555"/><rect x="3" y="20" width="25" height="4" fill="#222"/><text x="8.5" y="18.5" font-size="18" font-weight="bold" font-family="Liberation Sans" fill="#f59a2a">S</text></svg>
<div class="a" style="left:122px;top:729px;width:58px;height:38px;border:1px solid #000;border-radius:3px;background:linear-gradient(160deg,#a4a8ac 0,#5c6064 22%,#2a2e32 45%,#1c2024 60%,#1e2226 100%)"><div class="a" style="left:0;top:0;width:56px;height:36px;border:1px solid rgba(200,200,200,.55);border-radius:2px"></div></div>
<div class="a" style="left:184px;top:729px;width:58px;height:38px;border:1px solid #000;border-radius:3px;background:linear-gradient(160deg,#a4a8ac 0,#5c6064 22%,#2a2e32 45%,#1c2024 60%,#1e2226 100%)"><div class="a" style="left:0;top:0;width:56px;height:36px;border:1px solid rgba(200,200,200,.55);border-radius:2px"></div></div>
<div class="a" style="left:246px;top:729px;width:58px;height:38px;border:1px solid #000;border-radius:3px;background:linear-gradient(160deg,#a4a8ac 0,#5c6064 22%,#2a2e32 45%,#1c2024 60%,#1e2226 100%)"><div class="a" style="left:0;top:0;width:56px;height:36px;border:1px solid rgba(200,200,200,.55);border-radius:2px"></div></div>
<div class="a" style="left:308px;top:729px;width:58px;height:38px;border:1px solid #000;border-radius:3px;background:linear-gradient(165deg,#d4d4d4 0,#b0b0b0 35%,#7c7c7c 50%,#8e8e8e 100%)"><div class="a" style="left:0;top:0;width:56px;height:36px;border:1px solid rgba(255,255,255,.75);border-radius:2px"></div></div>
<svg style="left:136px;top:733px" width="30" height="30" viewBox="-15 -15 30 30"><circle r="14.5" fill="#db4437"/><path d="M0 0L-12.56 -7.25A14.5 14.5 0 0 0 0 14.5z" fill="#0f9d58"/><path d="M0 0L12.56 -7.25A14.5 14.5 0 0 1 0 14.5z" fill="#f4b400"/><circle r="7" fill="#fff"/><circle r="5.3" fill="#4285f4"/></svg>
<svg style="left:198px;top:733px" width="30" height="30" viewBox="0 0 30 30"><circle cx="9" cy="9" r="8" fill="#00aff0"/><circle cx="21" cy="21" r="8" fill="#00aff0"/><circle cx="15" cy="15" r="12.5" fill="#00aff0"/><text x="7.5" y="23" font-size="20" font-weight="bold" font-family="Liberation Sans" fill="#fff">S</text></svg>
<svg style="left:258px;top:734px" width="34" height="30" viewBox="0 0 34 30"><defs><linearGradient id="exf" x1="0" y1="0" x2="0" y2="1"><stop offset="0" stop-color="#fff6c8"/><stop offset="1" stop-color="#e8c868"/></linearGradient><linearGradient id="exb" x1="0" y1="0" x2="0" y2="1"><stop offset="0" stop-color="#a8e0fc"/><stop offset="1" stop-color="#3a98d8"/></linearGradient></defs><path d="M2 5.5q0-1.5 1.5-1.5h7l1.5 2h18q1.5 0 1.5 1.5V27H2z" fill="#e0c060" stroke="#c8a040" stroke-width=".8"/><rect x="4" y="1.5" width="9" height="5" fill="#fff" stroke="#d8c890" stroke-width=".6"/><rect x="5" y="2.5" width="2.5" height="2" fill="#20b020"/><rect x="12.5" y="3.5" width="9" height="5" fill="#fff" stroke="#d8c890" stroke-width=".6"/><rect x="13.5" y="4.5" width="2.5" height="2" fill="#d02020"/><rect x="20.5" y="5.5" width="9" height="5" fill="#fff" stroke="#d8c890" stroke-width=".6"/><rect x="21.5" y="6.5" width="2.5" height="2" fill="#2080e0"/><rect x="2.5" y="9" width="29" height="18" rx="1" fill="url(#exf)" stroke="#d0b050" stroke-width=".8"/><path d="M5 28.5V19q0-2 2-2h16q2 0 2 2v9.5h-5.5V23h-9v5.5z" fill="url(#exb)" stroke="#2a78c0" stroke-width=".8"/></svg>
<svg style="left:321px;top:732px" width="33" height="33" viewBox="0 0 33 33"><g transform="rotate(45 16.5 16.5)"><rect x="4.8" y="4.8" width="11.2" height="11.2" rx="1.5" fill="#f77a7a"/><rect x="17" y="4.8" width="11.2" height="11.2" rx="1.5" fill="#7ccc55"/><rect x="4.8" y="17" width="11.2" height="11.2" rx="1.5" fill="#7aaaf8"/><rect x="17" y="17" width="11.2" height="11.2" rx="1.5" fill="#fad86a"/></g><path d="M16 9v16M16.5 14l4 5" stroke="#555" stroke-width="2.2"/><circle cx="16" cy="24" r="2.2" fill="#555"/><circle cx="21" cy="19.5" r="2.2" fill="#555"/></svg>
<div class="t" style="left:1124px;top:738px;color:#fff">EN</div>
<svg style="left:1155px;top:746px" width="9" height="5" viewBox="0 0 9 5"><path d="M0 5L4.5 0 9 5z" fill="#fff"/></svg>
<svg style="left:1176px;top:742px" width="15" height="14" viewBox="0 0 15 14"><path d="M0.5 4.5h3l4-4v13l-4-4h-3z" fill="#fff"/><path d="M9.5 4.5c1 1.5 1 3.5 0 5M11.5 2.5c2 2.5 2 6.5 0 9" stroke="#fff" stroke-width="1.3" fill="none"/></svg>
<svg style="left:1200px;top:741px" width="16" height="16" viewBox="0 0 16 16"><defs><linearGradient id="vg" x1="0" y1="0" x2="1" y2="1"><stop offset="0" stop-color="#f8c8c8"/><stop offset=".5" stop-color="#f4f0f0"/><stop offset="1" stop-color="#e8a8a8"/></linearGradient></defs><rect x="0" y="0" width="16" height="16" fill="url(#vg)"/><path d="M3 3.5L7.5 12.5 13 3" stroke="#d03030" stroke-width="2.2" fill="none" stroke-linejoin="round"/></svg>
<svg style="left:1225px;top:743px" width="15" height="11" viewBox="0 0 15 11"><rect x="0.5" y="8" width="2" height="2.5" fill="#fff"/><rect x="3.5" y="6" width="2" height="4.5" fill="#fff"/><rect x="6.5" y="4" width="2" height="6.5" fill="#fff"/><rect x="9.5" y="2" width="2" height="8.5" fill="#fff"/><rect x="12.5" y="0" width="2" height="10.5" fill="#fff"/></svg>
<svg style="left:1249px;top:741px" width="14" height="16" viewBox="0 0 14 16"><rect x="0.7" y="3" width="7" height="11.5" rx="1" fill="none" stroke="#fff" stroke-width="1.2"/><rect x="2.5" y="1.5" width="7" height="11.5" rx="1" fill="#fff"/><path d="M7 6h6.5" stroke="#fff" stroke-width="1.3"/><path d="M8.5 3v3M11.5 3v3" stroke="#fff" stroke-width="1.3"/><path d="M7.5 6.5h5v2.5a2.5 2.5 0 0 1-5 0z" fill="#fff" stroke="#0a0d13" stroke-width=".6"/><path d="M10 11v4.5" stroke="#ccc" stroke-width="1.3"/></svg>
<div class="t" style="left:1291px;top:734px;color:#fff;font-size:12px;letter-spacing:-0.6px">9:35 SA</div>
<div class="t" style="left:1281px;top:751px;color:#fff">11/05/2016</div>
<div class="a" style="left:1352px;top:729px;width:14px;height:39px;border:1px solid #5a6068;border-right:none;background:linear-gradient(160deg,#3a3e44,#14181e 50%)"></div>
</body></html>
